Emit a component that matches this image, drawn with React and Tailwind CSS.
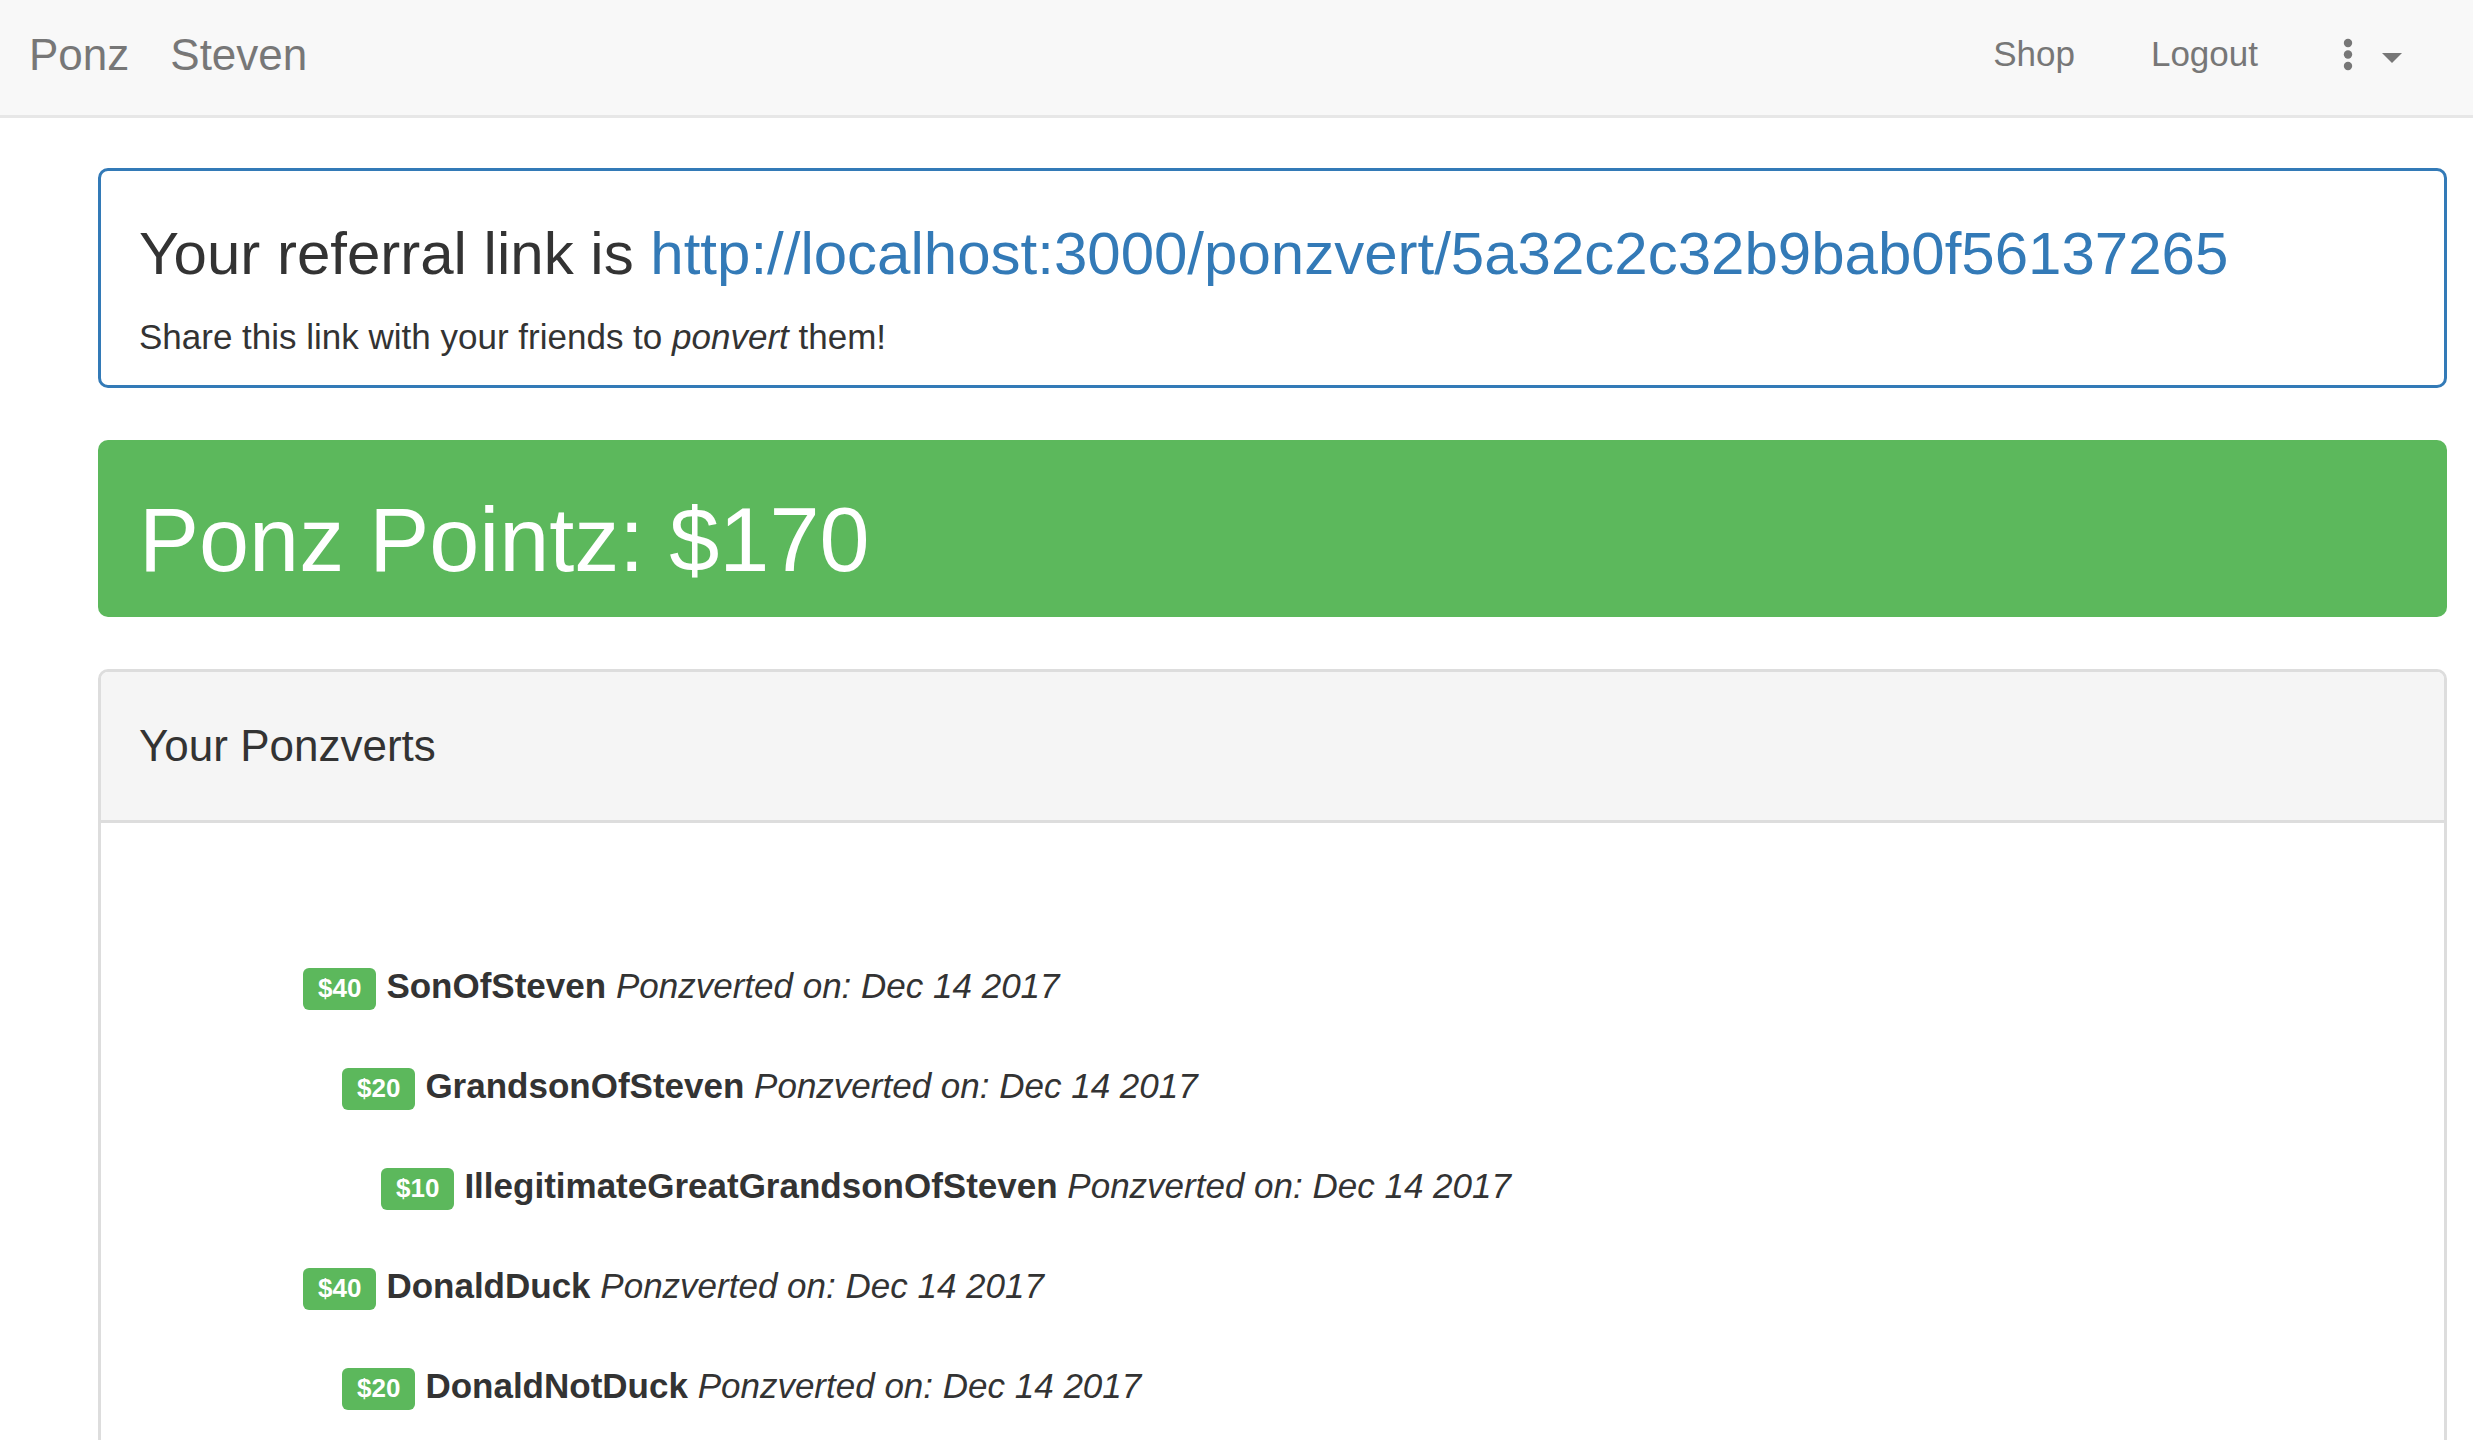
import React from 'react';

const ponzverts = [
    { amount: 40, name: 'SonOfSteven', level: 0 },
    { amount: 20, name: 'GrandsonOfSteven', level: 1 },
    { amount: 10, name: 'IllegitimateGreatGrandsonOfSteven', level: 2 },
    { amount: 40, name: 'DonaldDuck', level: 0 },
    { amount: 20, name: 'DonaldNotDuck', level: 1 },
];

const indent = ['pl-0', 'pl-[39px]', 'pl-[78px]'];

const Navbar = () => (
    <nav className="h-[118px] bg-[#f8f8f8] border-b-[3px] border-[#e7e7e7] flex items-center pb-[6px] pl-[29px] pr-[71px] text-[#777]">
        <span className="text-[44px]">Ponz</span>
        <span className="text-[44px] ml-[41px]">Steven</span>
        <div className="ml-auto flex items-center">
            <a className="text-[35px]">Shop</a>
            <a className="text-[35px] ml-[76px]">Logout</a>
            <button className="ml-[85px] flex items-center">
                <svg width="10" height="34" viewBox="0 0 10 34" className="fill-[#777]">
                    <circle cx="5" cy="5" r="4.2" />
                    <circle cx="5" cy="16.5" r="4.2" />
                    <circle cx="5" cy="28" r="4.2" />
                </svg>
                <svg width="20" height="10" viewBox="0 0 20 10" className="ml-[29px] mt-[6px] fill-[#777]">
                    <path d="M0 0h20L10 10z" />
                </svg>
            </button>
        </div>
    </nav>
);

const App = () => {
    return (
        <div className="min-h-screen bg-white text-[#333] font-['Liberation_Sans',Arial,sans-serif]">
            <Navbar />

            <div className="pl-[98px] pr-[26px] pt-[50px] pb-[60px]">
                {/* Referral link */}
                <div className="h-[220px] border-[3px] border-[#337ab7] rounded-[10px] pl-[38px] pt-[50px]">
                    <h2 className="text-[60px] leading-[66px]">
                        Your referral link is{' '}
                        <a className="text-[#337ab7]">http://localhost:3000/ponzvert/5a32c2c32b9bab0f56137265</a>
                    </h2>
                    <p className="text-[35px] leading-[50px] mt-[25px]">
                        Share this link with your friends to <em>ponvert</em> them!
                    </p>
                </div>

                {/* Points */}
                <div className="mt-[52px] h-[177px] bg-[#5cb85c] rounded-[10px] pl-[41px] pt-[55px]">
                    <h1 className="text-[90px] leading-none text-white">Ponz Pointz: $170</h1>
                </div>

                {/* Ponzverts panel */}
                <div className="mt-[52px] border-[3px] border-[#ddd] rounded-[10px] overflow-hidden">
                    <div className="h-[151px] bg-[#f5f5f5] border-b-[3px] border-[#ddd] flex items-center pl-[38px]">
                        <h3 className="text-[44px]">Your Ponzverts</h3>
                    </div>
                    <ul className="pt-[113px] pb-[120px] pl-[202px]">
                        {ponzverts.map((p) => (
                            <li key={p.name} className={`h-[100px] flex items-center ${indent[p.level]}`}>
                                <span className="h-[42px] px-[15px] flex items-center mt-[5px] bg-[#5cb85c] rounded-[6px] text-white font-bold text-[26px]">
                                    ${p.amount}
                                </span>
                                <span className="ml-[10px] text-[35px]">
                                    <strong>{p.name}</strong> <em>Ponzverted on: Dec 14 2017</em>
                                </span>
                            </li>
                        ))}
                    </ul>
                </div>
            </div>
        </div>
    );
};

export default App;
